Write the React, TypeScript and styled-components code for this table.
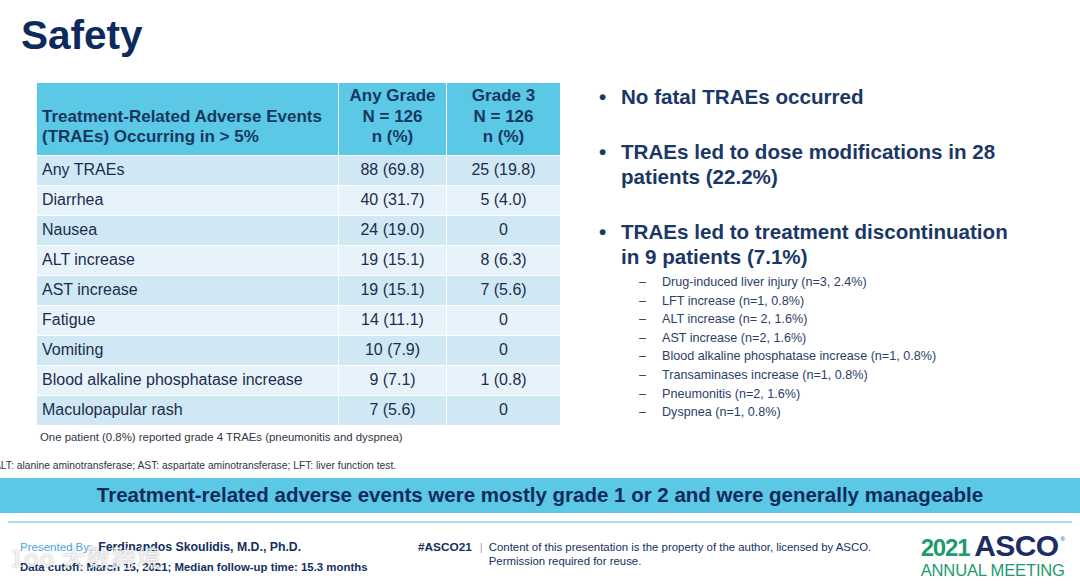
import React from "react";
import styled, { createGlobalStyle } from "styled-components";

const Global = createGlobalStyle`
  html, body { margin: 0; padding: 0; background: #fff; }
  body { font-family: "Liberation Sans", Arial, sans-serif; }
  * { box-sizing: border-box; }
`;

const NAVY = "#132f5f";
const CYAN = "#5bc8e6";

const Slide = styled.div`
  position: relative;
  width: 1080px;
  height: 584px;
  overflow: hidden;
  background: #fff;
  display: flex;
  flex-direction: column;
`;

const Title = styled.h1`
  margin: 12px 0 0 21px;
  font-size: 40.5px;
  line-height: 46px;
  font-weight: 700;
  color: #0d2a5e;
`;

const Main = styled.div`
  display: flex;
  align-items: flex-start;
  gap: 36px;
  margin-top: 25px;
  padding-left: 36px;
`;

const TableCol = styled.div`
  display: flex;
  flex-direction: column;
`;

const DataTable = styled.table`
  width: 524px;
  table-layout: fixed;
  border-collapse: collapse;
  color: #1d2d4e;
`;

const HeadCell = styled.th<{ $align?: string }>`
  background: ${CYAN};
  color: #17375e;
  font-size: 17px;
  font-weight: 700;
  line-height: 20.5px;
  text-align: ${(p) => p.$align || "center"};
  vertical-align: bottom;
  padding: 2px 5px 7px;
  height: 72px;
  border: 1px solid #fff;
  border-top: none;
`;

const Row = styled.tr<{ $dark: boolean }>`
  background: ${(p) => (p.$dark ? "#cfe8f4" : "#e7f3fa")};
`;

const Cell = styled.td<{ $align?: string }>`
  font-size: 16px;
  line-height: 28px;
  height: 30px;
  padding: 0 5px;
  text-align: ${(p) => p.$align || "center"};
  border: 1px solid #fff;
`;

const Footnote = styled.div`
  margin: 4px 0 0 4px;
  font-size: 11.4px;
  line-height: 14px;
  color: #2e3545;
`;

const Bullets = styled.ul`
  list-style: none;
  margin: 0;
  padding: 1px 0 0;
  width: 440px;
  display: flex;
  flex-direction: column;
  gap: 30px;
`;

const Bullet = styled.li`
  display: flex;
  color: #1b3765;
  font-size: 20.6px;
  font-weight: 700;
  line-height: 25px;
`;

const Dot = styled.span`
  flex: 0 0 24px;
  padding-left: 2px;
`;

const BulletBody = styled.div`
  display: flex;
  flex-direction: column;
`;

const SubList = styled.ul`
  list-style: none;
  margin: 4px 0 0 18px;
  padding: 0;
`;

const SubItem = styled.li`
  display: flex;
  font-size: 12.6px;
  font-weight: 400;
  line-height: 18.6px;
  color: #2b3e66;
`;

const Dash = styled.span`
  flex: 0 0 23px;
`;

const Abbrev = styled.div`
  margin: 15px 0 0 -6px;
  font-size: 10.3px;
  line-height: 13px;
  color: #2e3545;
  white-space: nowrap;
`;

const Banner = styled.div`
  margin-top: 6px;
  height: 35px;
  background: ${CYAN};
  display: flex;
  align-items: center;
  justify-content: center;
  font-size: 20.5px;
  font-weight: 700;
  color: #0f2b5b;
`;

const Footer = styled.div`
  margin: 8px 8px 0;
  border-top: 2px solid #a8ddf0;
  display: flex;
  padding: 14px 7px 0 12px;
`;

const Presenter = styled.div`
  width: 398px;
  font-size: 11px;
  line-height: 20px;
  color: ${NAVY};
`;

const Light = styled.span`
  color: #4ba6da;
  font-size: 11.5px;
  margin-right: 6px;
`;

const Strong = styled.span<{ $size?: number }>`
  font-weight: 700;
  font-size: ${(p) => p.$size || 11}px;
`;

const Notice = styled.div`
  flex: 1;
  display: flex;
  align-items: flex-start;
  padding-top: 3px;
  font-size: 11.4px;
  line-height: 14px;
  color: ${NAVY};
`;

const Tag = styled.span`
  font-weight: 700;
  font-size: 11.8px;
`;

const Sep = styled.span`
  color: #9aa6b8;
  margin: 0 6px 0 8px;
`;

const Logo = styled.div`
  display: flex;
  flex-direction: column;
  align-items: flex-start;
  margin-top: -6px;
`;

const LogoTop = styled.div`
  display: flex;
  align-items: baseline;
  line-height: 29px;
`;

const LogoYear = styled.span`
  color: #1f9a6c;
  font-size: 24px;
  font-weight: 700;
  letter-spacing: -1.2px;
`;

const LogoName = styled.span`
  color: #1b2d62;
  font-size: 30px;
  font-weight: 700;
  letter-spacing: -0.6px;
  margin-left: 5px;
`;

const Reg = styled.span`
  align-self: flex-start;
  color: #1b2d62;
  font-size: 6px;
  line-height: 10px;
  margin: 3px 0 0 2px;
`;

const LogoSub = styled.div`
  color: #1f9a6c;
  font-size: 16.6px;
  line-height: 18px;
  letter-spacing: -0.2px;
`;

const Watermark = styled.div`
  position: absolute;
  left: 10px;
  top: 540px;
  font-family: "Noto Sans CJK SC", "Liberation Sans", sans-serif;
  font-size: 24px;
  line-height: 34px;
  color: rgba(255, 255, 255, 0.85);
  text-shadow: 0 0 2px rgba(0, 0, 0, 0.35);
  letter-spacing: 1px;
  pointer-events: none;
`;

const rows: [string, string, string][] = [
  ["Any TRAEs", "88 (69.8)", "25 (19.8)"],
  ["Diarrhea", "40 (31.7)", "5 (4.0)"],
  ["Nausea", "24 (19.0)", "0"],
  ["ALT increase", "19 (15.1)", "8 (6.3)"],
  ["AST increase", "19 (15.1)", "7 (5.6)"],
  ["Fatigue", "14 (11.1)", "0"],
  ["Vomiting", "10 (7.9)", "0"],
  ["Blood alkaline phosphatase increase", "9 (7.1)", "1 (0.8)"],
  ["Maculopapular rash", "7 (5.6)", "0"],
];

const subs = [
  "Drug-induced liver injury (n=3, 2.4%)",
  "LFT increase (n=1, 0.8%)",
  "ALT increase (n= 2, 1.6%)",
  "AST increase (n=2, 1.6%)",
  "Blood alkaline phosphatase increase (n=1, 0.8%)",
  "Transaminases increase (n=1, 0.8%)",
  "Pneumonitis (n=2, 1.6%)",
  "Dyspnea (n=1, 0.8%)",
];

export default function App() {
  return (
    <Slide>
      <Global />
      <Title>Safety</Title>
      <Main>
        <TableCol>
          <DataTable>
            <colgroup>
              <col style={{ width: 302 }} />
              <col style={{ width: 108 }} />
              <col style={{ width: 114 }} />
            </colgroup>
            <thead>
              <tr>
                <HeadCell $align="left">
                  Treatment-Related Adverse Events
                  <br />
                  (TRAEs) Occurring in &gt; 5%
                </HeadCell>
                <HeadCell>
                  Any Grade
                  <br />N = 126
                  <br />n (%)
                </HeadCell>
                <HeadCell>
                  Grade 3
                  <br />N = 126
                  <br />n (%)
                </HeadCell>
              </tr>
            </thead>
            <tbody>
              {rows.map((r, i) => (
                <Row key={r[0]} $dark={i % 2 === 0}>
                  <Cell $align="left">{r[0]}</Cell>
                  <Cell>{r[1]}</Cell>
                  <Cell>{r[2]}</Cell>
                </Row>
              ))}
            </tbody>
          </DataTable>
          <Footnote>
            One patient (0.8%) reported grade 4 TRAEs (pneumonitis and dyspnea)
          </Footnote>
        </TableCol>
        <Bullets>
          <Bullet>
            <Dot>•</Dot>
            <BulletBody>No fatal TRAEs occurred</BulletBody>
          </Bullet>
          <Bullet>
            <Dot>•</Dot>
            <BulletBody>
              <span>TRAEs led to dose modifications in 28</span>
              <span>patients (22.2%)</span>
            </BulletBody>
          </Bullet>
          <Bullet>
            <Dot>•</Dot>
            <BulletBody>
              <span>TRAEs led to treatment discontinuation</span>
              <span>in 9 patients (7.1%)</span>
              <SubList>
                {subs.map((s) => (
                  <SubItem key={s}>
                    <Dash>–</Dash>
                    <span>{s}</span>
                  </SubItem>
                ))}
              </SubList>
            </BulletBody>
          </Bullet>
        </Bullets>
      </Main>
      <Abbrev>
        ALT: alanine aminotransferase; AST: aspartate aminotransferase; LFT: liver function test.
      </Abbrev>
      <Banner>
        Treatment-related adverse events were mostly grade 1 or 2 and were generally manageable
      </Banner>
      <Footer>
        <Presenter>
          <div>
            <Light>Presented By:</Light>
            <Strong $size={12.3}>Ferdinandos Skoulidis, M.D., Ph.D.</Strong>
          </div>
          <div>
            <Strong $size={11.4}>Data cutoff: March 15, 2021; Median follow-up time: 15.3 months</Strong>
          </div>
        </Presenter>
        <Notice>
          <Tag>#ASCO21</Tag>
          <Sep>|</Sep>
          <div>
            Content of this presentation is the property of the author, licensed by ASCO.
            <br />
            Permission required for reuse.
          </div>
        </Notice>
        <Logo>
          <LogoTop>
            <LogoYear>2021</LogoYear>
            <LogoName>ASCO</LogoName>
            <Reg>®</Reg>
          </LogoTop>
          <LogoSub>ANNUAL MEETING</LogoSub>
        </Logo>
      </Footer>
      <Watermark>1oo 大数跨境</Watermark>
    </Slide>
  );
}
